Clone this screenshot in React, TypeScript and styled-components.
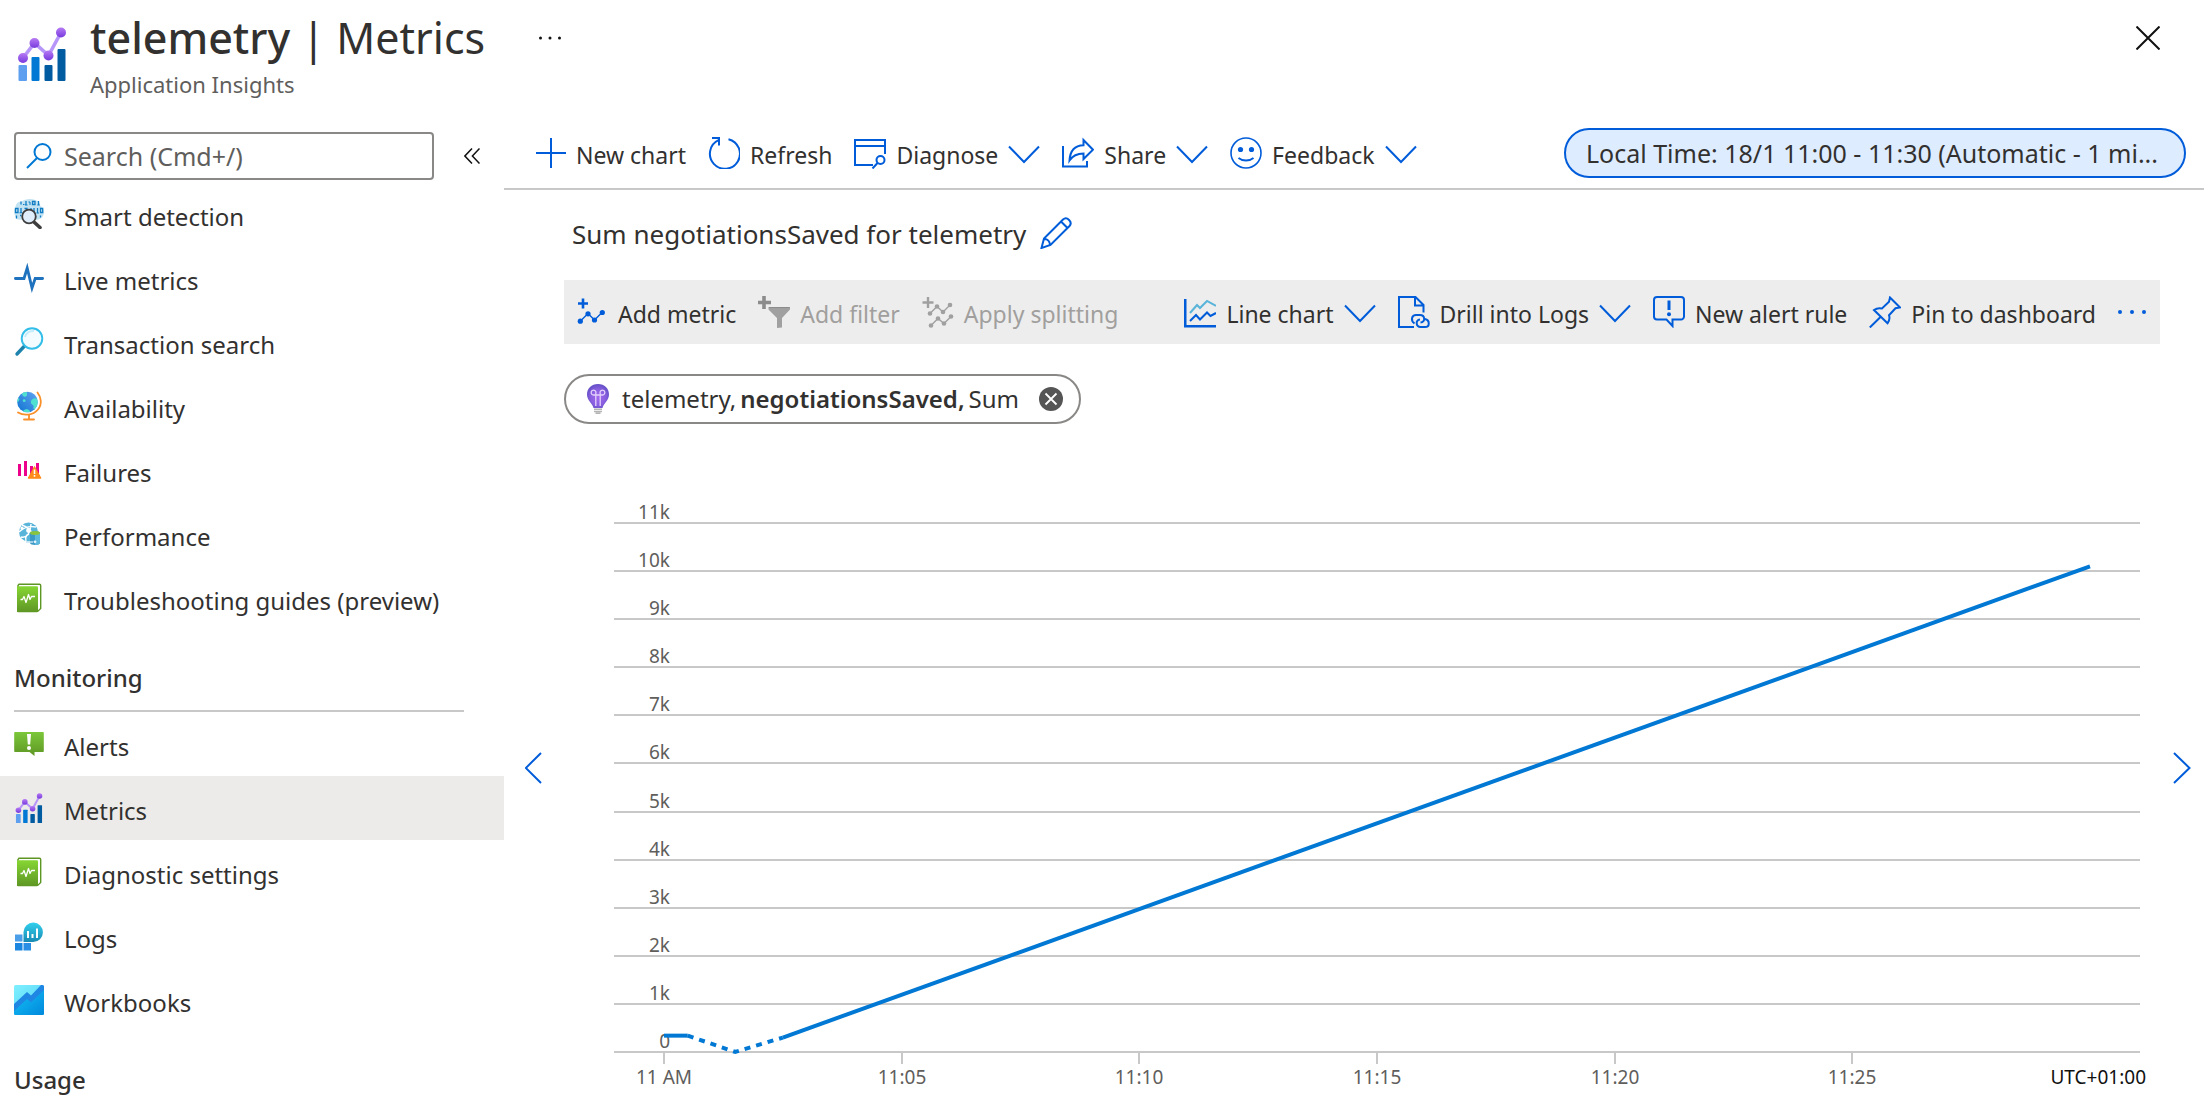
import React from "react";
import styled, { createGlobalStyle } from "styled-components";

const BLUE = "#015cda";
const TEXT = "#323130";

const GlobalStyle = createGlobalStyle`
  *, *::before, *::after { box-sizing: border-box; }
  body {
    margin: 0;
    background: #fff;
    color: ${TEXT};
    font-family: "Noto Sans", "Open Sans", sans-serif;
    font-size: 24px;
    line-height: 32px;
    overflow: hidden;
  }
  button, input { font: inherit; color: inherit; }
  svg { display: block; flex: none; }
`;

const Page = styled.div`
  display: flex;
  flex-direction: column;
  height: 100vh;
`;

const Header = styled.header`
  display: flex;
  align-items: flex-start;
  flex: none;
  height: 118px;
  padding: 8px 44px 0 18px;
`;

const HeaderIcon = styled.div`
  padding-top: 19px;
  margin-right: 24px;
`;

const Title = styled.h1`
  margin: 0;
  font-size: 43px;
  line-height: 60px;
  font-weight: 400;
  white-space: nowrap;
`;

const TitleName = styled.span`
  font-weight: 500;
`;

const Subtitle = styled.p`
  margin: 0;
  font-size: 22px;
  color: #605e5c;
`;

const IconButton = styled.button`
  display: flex;
  align-items: center;
  justify-content: center;
  padding: 0;
  border: 0;
  background: none;
  cursor: pointer;
`;

const MoreButton = styled(IconButton)`
  height: 60px;
  margin-left: 54px;
`;

const CloseButton = styled(IconButton)`
  height: 60px;
  margin-left: auto;
`;

const Body = styled.div`
  display: flex;
  flex: 1;
  min-height: 0;
`;

const Sidebar = styled.nav`
  flex: none;
  width: 504px;
  padding-top: 14px;
`;

const SearchRow = styled.div`
  display: flex;
  align-items: center;
  gap: 30px;
  height: 48px;
  margin: 0 0 2px 14px;
`;

const SearchBox = styled.label`
  display: flex;
  align-items: center;
  gap: 12px;
  width: 420px;
  height: 48px;
  padding: 0 10px;
  border: 2px solid #8a8886;
  border-radius: 4px;
`;

const SearchInput = styled.input`
  flex: 1;
  min-width: 0;
  padding: 0;
  border: 0;
  outline: 0;
  background: none;
  font-size: 25px;
  &::placeholder { color: #605e5c; opacity: 1; }
`;

const NavList = styled.ul`
  margin: 0;
  padding: 0;
  list-style: none;
`;

const NavLink = styled.a<{ $active?: boolean }>`
  display: flex;
  align-items: center;
  gap: 20px;
  height: 64px;
  padding-left: 14px;
  background: ${(p) => (p.$active ? "#edebe9" : "transparent")};
  color: inherit;
  text-decoration: none;
`;

const NavText = styled.span`
  padding-top: 6px;
`;

const NavHeading = styled.h2`
  margin: 0 40px 0 14px;
  padding: 32px 0 16px;
  border-bottom: 2px solid #c8c8c8;
  font-size: 24px;
  font-weight: 500;
`;

const Main = styled.main`
  display: flex;
  flex-direction: column;
  flex: 1;
  min-width: 0;
`;

const CommandBar = styled.div`
  display: flex;
  align-items: center;
  gap: 22px;
  flex: none;
  height: 72px;
  padding: 0 18px 0 30px;
  border-bottom: 2px solid #c8c8c8;
`;

const Command = styled.button`
  display: flex;
  align-items: center;
  gap: 10px;
  padding: 0;
  border: 0;
  background: none;
  font-size: 23px;
  white-space: nowrap;
  cursor: pointer;
  &:disabled { color: #a19f9d; cursor: default; }
`;

const CommandText = styled.span`
  padding-top: 4px;
`;

const TimeRange = styled.button`
  width: 622px;
  height: 50px;
  margin-left: auto;
  padding: 0 20px;
  border: 2px solid ${BLUE};
  border-radius: 25px;
  background: #deecff;
  font-size: 25px;
  text-align: left;
  white-space: nowrap;
  overflow: hidden;
  cursor: pointer;
`;

const ChartHeading = styled.div`
  display: flex;
  align-items: center;
  gap: 14px;
  flex: none;
  height: 90px;
  padding: 0 0 4px 68px;
`;

const ChartTitle = styled.h2`
  margin: 0;
  padding-top: 2px;
  font-size: 26px;
  font-weight: 400;
`;

const ChartBar = styled.div`
  display: flex;
  align-items: center;
  gap: 22px;
  flex: none;
  height: 64px;
  margin: 0 44px 0 60px;
  padding: 0 14px 0 12px;
  background: #ededed;
`;

const BarSpacer = styled.span`
  flex: 1;
`;

const MetricRow = styled.div`
  display: flex;
  flex: none;
  padding: 30px 44px 12px 60px;
`;

const MetricPill = styled.div`
  display: flex;
  align-items: center;
  height: 50px;
  padding: 0 16px 0 20px;
  border: 2px solid #8a8886;
  border-radius: 25px;
  white-space: nowrap;
`;

const MetricText = styled.span`
  display: flex;
  gap: 4px;
  margin: 0 20px 0 12px;
`;

const MetricName = styled.strong`
  font-weight: 600;
`;

const ChartArea = styled.div`
  display: flex;
  align-items: center;
  flex: 1;
  min-height: 0;
`;

const PagerButton = styled(IconButton)<{ $width: number }>`
  flex: none;
  width: ${(p) => p.$width}px;
  height: 64px;
`;

const ChartSvg = styled.svg`
  flex: 1;
  min-width: 0;
  overflow: visible;
`;

const AxisText = styled.text`
  font-size: 19px;
  fill: #605e5c;
`;

const ZoneText = styled(AxisText)`
  fill: #111;
`;

/* ---------- icons ---------- */

const MetricsIcon = ({ width, height, id }: { width: number; height: number; id: string }) => (
  <svg width={width} height={height} viewBox="0 0 48 54" aria-hidden="true">
    <defs>
      <linearGradient id={id} x1="0" y1="0" x2="0" y2="1">
        <stop offset="0" stopColor="#b77af4" />
        <stop offset="1" stopColor="#773adc" />
      </linearGradient>
    </defs>
    <rect x="0.5" y="38" width="8.5" height="16" rx="1" fill="#5ea0ef" />
    <rect x="13.5" y="30" width="8" height="24" rx="1" fill="#0078d4" />
    <rect x="26.5" y="38" width="8" height="16" rx="1" fill="#005ba1" />
    <rect x="39.5" y="22" width="8" height="32" rx="1" fill="#005ba1" />
    <path d="M5 31 16.500 16 30.500 28.500 43 5.500" fill="none" stroke="#b796f9" strokeWidth="3.600" />
    {[[5, 31], [16.5, 16], [30.5, 28.5], [43, 5.5]].map(([x, y]) => (
      <circle key={x} cx={x} cy={y} r="5" fill={`url(#${id})`} />
    ))}
  </svg>
);

const SearchIcon = () => (
  <svg width="26" height="26" viewBox="0 0 26 26" fill="none" stroke="#0078d4" strokeWidth="2" aria-hidden="true">
    <circle cx="16.500" cy="9" r="8" />
    <path d="M11 15 1 25" />
  </svg>
);

const CollapseIcon = () => (
  <svg width="16" height="16" viewBox="0 0 16 16" fill="none" stroke="#111" strokeWidth="1.500" aria-hidden="true">
    <path d="M8 .5.900 8 8 15.500M15.500.5 8.400 8l7.100 7.500" />
  </svg>
);

const CloseIcon = () => (
  <svg width="24" height="24" viewBox="0 0 24 24" stroke="#111" strokeWidth="2" aria-hidden="true">
    <path d="M.5.5l23 23M23.500.5l-23 23" />
  </svg>
);

const DotsIcon = ({ color, size, radius }: { color: string; size: number; radius: number }) => (
  <svg width={size} height="6" viewBox={`0 0 ${size} 6`} fill={color} aria-hidden="true">
    <circle cx={radius} cy="3" r={radius} />
    <circle cx={size / 2} cy="3" r={radius} />
    <circle cx={size - radius} cy="3" r={radius} />
  </svg>
);

const SmartDetectionIcon = () => (
  <svg width="30" height="30" viewBox="0 0 30 30" aria-hidden="true">
    <path d="M8 2.500C11-.5 19-.8 22 1.500c3 .2 4.500 3 4.200 5.500 4 1.500 5 8 2 11-2 2.500-4 3-7 2.500L8 20.500c-4 1-7-1-7-4-1.500-3-1-6.500.5-8C1.500 5 4 2 8 2.500z" fill="#c3e3f2" />
    <g fill="none" stroke="#0f7cc4" strokeWidth="1.300">
      <path d="M7 2.500v3M12 2v4M18.500 2.500h2.500v3h-2.500zM24.500 2v4M1.500 9.500h2.500v4h-2.500zM7 9v5M10.500 9.500h2.500v3M17 9v2M20 9v5M23.500 9v5M26.500 9.500h2.200v4h-2.200zM2.500 16.500v3M6 16.500h1.500M26.500 16.500v2" />
      <path d="M9 5.500h1.500M5.500 13.800h3M11 6h2.500M14.500 3h1.500v3M23.300 6h2.500M19 14h2.200M22.500 14h2.500" strokeWidth="1" />
    </g>
    <path d="M20.500 23.500 26 28.500" stroke="#3e3e3e" strokeWidth="3.600" strokeLinecap="round" />
    <circle cx="15" cy="17.500" r="6.800" fill="#dfeefa" stroke="#3e3e3e" strokeWidth="1.800" />
  </svg>
);

const PulseIcon = () => (
  <svg width="30" height="30" viewBox="0 0 30 30" fill="none" stroke="#1f72bd" strokeWidth="2.800" strokeLinejoin="miter" strokeLinecap="round" aria-hidden="true">
    <path d="M1.400 15.500H10L13.200 5l4.800 20 3.200-9.500h7.400" />
  </svg>
);

const TransactionIcon = () => (
  <svg width="30" height="30" viewBox="0 0 30 30" fill="none" aria-hidden="true">
    <path d="M11 18.500 3 27" stroke="#1d83ad" strokeWidth="3.400" strokeLinecap="round" />
    <circle cx="18" cy="11.500" r="10.300" fill="#f2fbff" stroke="#32bee8" strokeWidth="1.900" />
    <path d="M11 10a8 8 0 0 1 9-6" stroke="#c3ecfa" strokeWidth="2" />
  </svg>
);

const GlobeIcon = () => (
  <svg width="30" height="30" viewBox="0 0 30 30" aria-hidden="true">
    <defs>
      <linearGradient id="globe" x1="0" y1="1" x2="1" y2="0">
        <stop offset="0" stopColor="#0f74d1" />
        <stop offset="1" stopColor="#62a4f1" />
      </linearGradient>
      <clipPath id="globeClip"><circle cx="13.500" cy="11" r="10.300" /></clipPath>
    </defs>
    <circle cx="13.500" cy="11" r="10.300" fill="url(#globe)" />
    <g clipPath="url(#globeClip)" fill="#4fe0cf">
      <path d="M8 1l5-1c-.5 3 1 4-1 5.500-2 1-4.500-1-4-4.500zM3 8l2.200-1c.5 2-.5 3.500-2.200 4.500z" />
      <circle cx="10.200" cy="9.700" r="1.400" />
      <path d="M17 10c1.500-3 4-3.500 7-2l1 6-5 4.500c-1.500-1.500.5-3-1-4.500-1.500-.5-2.500-2-2-4zM9 20c2-2.500 5-2 6.500-.5l1 2.500h-8z" />
    </g>
    <path d="M23.500 1.500C27 6 28.500 13 24 18.500 19 24.500 10 25 4 21.500" fill="none" stroke="#f98f28" strokeWidth="1.800" strokeLinecap="round" />
    <path d="M15 24v4M10 28.500h10" stroke="#f98f28" strokeWidth="1.800" strokeLinecap="round" />
  </svg>
);

const FailuresIcon = () => (
  <svg width="30" height="30" viewBox="0 0 30 30" aria-hidden="true">
    <path d="M4 9h3v12H4zM10 6h3v15h-3zM16 11h3v10h-3zM22 8h3v12h-3z" fill="#ec008c" />
    <path d="M20.500 11.500 27 23.200H14.200z" fill="#ff8c1a" stroke="#ff8c1a" strokeLinejoin="round" />
    <path d="M20.500 14.500v4.500M20.500 20v1.800" stroke="#fff" strokeWidth="1.600" />
  </svg>
);

const PerformanceIcon = () => (
  <svg width="30" height="30" viewBox="0 0 30 30" aria-hidden="true">
    <circle cx="14.500" cy="13" r="9.500" fill="#59b4d9" />
    <path d="M5 13c5-5 11-6 17-5M8 6c6 2 10 6 12 12M7 18c5 1 9-2 10-13M12 22c-1-4 0-6 3-7" fill="none" stroke="#fff" strokeWidth="1.400" />
    <circle cx="14.500" cy="11.500" r="2.400" fill="#fff" />
    <circle cx="8" cy="9" r="1.600" fill="#fff" />
    <path d="M16 14c0-2.500 10-2.500 10 0v10c0 2.500-10 2.500-10 0z" fill="#3c99c5" />
    <path d="M21 12.200c3 0 5 .8 5 1.800v10c0 1.200-2 1.900-5 1.900z" fill="#5db8dd" />
    <ellipse cx="21" cy="14" rx="5" ry="1.900" fill="#8ac43f" />
    <path d="M12 23h7" stroke="#c5e4f2" strokeWidth="1.500" />
    <circle cx="21" cy="22.800" r="1.400" fill="#e8f5fb" />
  </svg>
);

const GuideIcon = ({ id }: { id: string }) => (
  <svg width="30" height="30" viewBox="0 0 30 30" aria-hidden="true">
    <defs>
      <linearGradient id={id} x1="0" y1="0" x2="0" y2="1">
        <stop offset="0" stopColor="#86d633" />
        <stop offset="1" stopColor="#5e9624" />
      </linearGradient>
    </defs>
    <path d="M5 1.200h20.500a1.200 1.200 0 0 1 1.200 1.200v23l-3 3H4V2.500z" fill="#fff" stroke="#5e9624" strokeWidth="1.400" />
    <rect x="3" y="3.200" width="21" height="26" rx="1.200" fill={`url(#${id})`} />
    <path d="M6.500 16.500h2l1.500-3 2 6 2.500-8 1.500 5 1.500-3h3.500" fill="none" stroke="#fff" strokeWidth="1.300" strokeLinejoin="round" />
  </svg>
);

const AlertsIcon = () => (
  <svg width="30" height="30" viewBox="0 0 30 30" aria-hidden="true">
    <defs>
      <linearGradient id="alerts" x1="0" y1="0" x2="0" y2="1">
        <stop offset="0" stopColor="#7cc73a" />
        <stop offset="1" stopColor="#5e9624" />
      </linearGradient>
    </defs>
    <path d="M1 3h28a.8.8 0 0 1 .8.8v18.500a.8.8 0 0 1-.8.800h-8.500v4l-5-4H1a.8.8 0 0 1-.8-.8V3.800A.8.8 0 0 1 1 3z" fill="url(#alerts)" />
    <path d="M13 5h4l-.8 10.500h-2.400z" fill="#fff" />
    <circle cx="15" cy="19" r="2" fill="#fff" />
  </svg>
);

const LogsIcon = () => (
  <svg width="30" height="30" viewBox="0 0 30 30" aria-hidden="true">
    <defs>
      <linearGradient id="logs" x1="0" y1="0" x2="0" y2="1">
        <stop offset="0" stopColor="#32d0ee" />
        <stop offset="1" stopColor="#198ab3" />
      </linearGradient>
    </defs>
    <rect x="1" y="13.500" width="7.500" height="7" fill="#4a9fe8" />
    <rect x="1" y="22" width="7.500" height="7.500" fill="#1b86df" />
    <rect x="9.500" y="22" width="7.500" height="7.500" fill="#2a8fe4" />
    <path d="M9.500 21V11a9.700 9.700 0 1 1 9.700 10z" fill="url(#logs)" />
    <path d="M14 10v7M18.500 13v4M23 7.500v9.500" stroke="#fff" strokeWidth="2" />
  </svg>
);

const WorkbooksIcon = () => (
  <svg width="30" height="30" viewBox="0 0 30 30" aria-hidden="true">
    <defs>
      <linearGradient id="workTop" x1="0" y1="0" x2="1" y2="1">
        <stop offset="0" stopColor="#7ff0ff" />
        <stop offset="1" stopColor="#50d0f5" />
      </linearGradient>
      <linearGradient id="workBottom" x1="0" y1="0" x2="1" y2="1">
        <stop offset="0" stopColor="#16c3f5" />
        <stop offset="1" stopColor="#0088dd" />
      </linearGradient>
    </defs>
    <rect width="30" height="30" rx="1.500" fill="url(#workTop)" />
    <path d="M0 25 13 13l4 4L30 4v24.500a1.500 1.500 0 0 1-1.500 1.500h-27A1.500 1.500 0 0 1 0 28.500z" fill="url(#workBottom)" />
    <path d="M0 19 13 7l4 3.500L27 0h1.500A1.500 1.500 0 0 1 30 1.500V5L17 17.500l-4-3.500L0 26z" fill="#1f86e3" />
  </svg>
);

const Line = ({ children, width = 2 }: { children: React.ReactNode; width?: number }) => (
  <svg width="32" height="32" viewBox="0 0 32 32" fill="none" stroke={BLUE} strokeWidth={width} aria-hidden="true">
    {children}
  </svg>
);

const PlusIcon = () => <Line><path d="M17 1v30M2 16h30" /></Line>;
const RefreshIcon = () => (
  <Line><path d="M10.500 3.200A15 15 0 1 0 20.500 2.200M4 1h7v7.500" /></Line>
);
const DiagnoseIcon = () => (
  <Line>
    <path d="M19 28H1V3h30v14M1 9h30" />
    <circle cx="26.500" cy="23" r="4" />
    <path d="M23.500 26 18.500 31.500" />
  </Line>
);
const ChevronIcon = () => <Line><path d="M1 9.500 16 25 31 9.500" /></Line>;
const ShareIcon = () => (
  <Line>
    <path d="M1 9v20.500h24V24" />
    <path d="M7.500 23.500C8 14 13 8.500 21.500 8.200V3L31 12.700 21.500 22v-5.500C15 16.500 10.500 19 7.500 23.500z" />
  </Line>
);
const SmileIcon = () => (
  <Line>
    <circle cx="16" cy="16" r="15" strokeWidth="1.600" />
    <circle cx="10.500" cy="12.500" r="2.600" fill={BLUE} stroke="none" />
    <circle cx="21.500" cy="12.500" r="2.600" fill={BLUE} stroke="none" />
    <path d="M8.500 21c4 3.300 11 3.300 15 0" />
  </Line>
);
const PencilIcon = () => (
  <Line>
    <path d="M1.500 31 4 21.500 23 2.500c4-3.500 10 2.500 6.500 6.500L10.500 28zM21 4.500l7 7M4.500 22c3 0 5.500 2.500 5.500 6" />
  </Line>
);
const AddMetricIcon = () => (
  <Line width={1.4}>
    <path d="M7 2.500v10M2 7.500h10" strokeWidth="2.600" />
    <path d="M4 25.500 12 17.500 18.500 24 26.500 16" />
    <g fill={BLUE} stroke="none">
      <circle cx="4.300" cy="25.200" r="2.600" /><circle cx="12" cy="17.800" r="2.600" />
      <circle cx="18.500" cy="24" r="2.600" /><circle cx="26.300" cy="16.500" r="2.600" />
    </g>
  </Line>
);
const FilterIcon = () => (
  <svg width="32" height="32" viewBox="0 0 32 32" aria-hidden="true">
    <path d="M6 0v13M0 6.500h13" stroke="#8c8c8c" strokeWidth="3.600" />
    <path d="M10.500 11H32v2.500l-8 8.500v9.500l-5 .5V22l-8.500-8.500z" fill="#a0a0a0" />
    <path d="M11 11.500h20.500" stroke="#8c8c8c" />
  </svg>
);
const SplitIcon = () => (
  <svg width="32" height="32" viewBox="0 0 32 32" fill="none" stroke="#a0a0a0" strokeWidth="1.400" aria-hidden="true">
    <path d="M6 1v11M.5 6.500h11" strokeWidth="2.400" />
    <path d="M8 17.500 15 10.500 21 16 28 9M9 29.500 16 22.500 22 27.500 29 20.500" />
    <g fill="#a0a0a0" stroke="none">
      {[[8, 17.5], [15, 10.5], [21, 16], [28, 9], [9, 29.500], [16, 22.5], [22, 27.5], [29, 20.5]].map(([x, y]) => (
        <circle key={`${x}-${y}`} cx={x} cy={y} r="2.300" />
      ))}
    </g>
  </svg>
);
const LineChartIcon = () => (
  <Line>
    <path d="M1.200 3v27.300H32" strokeWidth="2.600" />
    <path d="M6 17l7-8 3 3 7-7 9 5" stroke="#59b4d9" />
    <path d="M6 25l6-6 4 4.500 7-7 3.500 3.500 5.500-3" />
  </Line>
);
const DrillIcon = () => (
  <Line>
    <path d="M16 31H1V1h16.500l8 8v7.500M17 1.500V9.500h8" />
    <path d="M16.500 27.500c-4.500-3.500-2.500-8.500 1.500-8.500h4c5 0 6 7 .5 7.500M27 23c5 1 5 8 0 8h-4.500c-4.500 0-5.500-7-.5-7.500" />
  </Line>
);
const AlertRuleIcon = () => (
  <Line>
    <path d="M4 1h24a3 3 0 0 1 3 3v16.500a3 3 0 0 1-3 3h-8.500v6.500l-6-6.500H4a3 3 0 0 1-3-3V4a3 3 0 0 1 3-3z" />
    <path d="M16 4.500v9.500" strokeWidth="3" />
    <circle cx="16" cy="18.300" r="2" fill={BLUE} stroke="none" />
  </Line>
);
const PinIcon = () => (
  <Line>
    <path d="M21 1.500 31 11.500l-4.500.8-6.500 7c1 3 .5 5.500-1.500 8L5 14c2.500-1.800 5-2.300 8-1.500l7-6.800zM12 20.500.8 31.500" />
  </Line>
);

const BulbIcon = () => (
  <svg width="24" height="30" viewBox="0 0 24 30" aria-hidden="true">
    <defs>
      <radialGradient id="bulb" cx="0.500" cy="0.550" r="0.600">
        <stop offset="0" stopColor="#a268ee" />
        <stop offset="0.550" stopColor="#8a5fe0" />
        <stop offset="1" stopColor="#5a4cc0" />
      </radialGradient>
    </defs>
    <path d="M12 0c6.500 0 11 4.500 11 10.500 0 6-5 8-6.500 13.500h-9C6 18.500 1 16.500 1 10.500 1 4.500 5.500 0 12 0z" fill="url(#bulb)" />
    <path d="M9.800 22V9.500a2.400 2.400 0 1 0-2.400 1.500h9.200a2.400 2.400 0 1 0-2.400-1.500V22" fill="none" stroke="#e3d2fb" strokeWidth="1.300" />
    <path d="M8 25.200h8M8 27.400h8M9.500 29.300h5" stroke="#b3b3b3" strokeWidth="1.500" />
  </svg>
);

const RemoveIcon = () => (
  <svg width="24" height="24" viewBox="0 0 24 24" aria-hidden="true">
    <circle cx="12" cy="12" r="12" fill="#555" />
    <path d="M6.500 6.500l11 11M17.500 6.500l-11 11" stroke="#fff" strokeWidth="1.800" />
  </svg>
);

const PagerIcon = ({ right }: { right?: boolean }) => (
  <svg width="18" height="32" viewBox="0 0 18 32" fill="none" stroke={BLUE} strokeWidth="2" aria-hidden="true">
    <path d={right ? "M1 1l15.500 15L1 31" : "M16 1 .8 16 16 31"} />
  </svg>
);

/* ---------- data ---------- */

const investigate = [
  { label: "Smart detection", icon: <SmartDetectionIcon /> },
  { label: "Live metrics", icon: <PulseIcon /> },
  { label: "Transaction search", icon: <TransactionIcon /> },
  { label: "Availability", icon: <GlobeIcon /> },
  { label: "Failures", icon: <FailuresIcon /> },
  { label: "Performance", icon: <PerformanceIcon /> },
  { label: "Troubleshooting guides (preview)", icon: <GuideIcon id="guideA" /> },
];

const monitoring = [
  { label: "Alerts", icon: <AlertsIcon /> },
  { label: "Metrics", icon: <MetricsIcon width={30} height={30} id="metricsSmall" />, active: true },
  { label: "Diagnostic settings", icon: <GuideIcon id="guideB" /> },
  { label: "Logs", icon: <LogsIcon /> },
  { label: "Workbooks", icon: <WorkbooksIcon /> },
];

type NavItem = { label: string; icon: React.ReactNode; active?: boolean };

const NavSection = ({ items }: { items: NavItem[] }) => (
  <NavList>
    {items.map((item) => (
      <li key={item.label}>
        <NavLink href="#" $active={item.active} aria-current={item.active ? "page" : undefined}>
          {item.icon}
          <NavText>{item.label}</NavText>
        </NavLink>
      </li>
    ))}
  </NavList>
);

type CommandProps = { icon: React.ReactNode; label: string; menu?: boolean; disabled?: boolean };

const CommandButton = ({ icon, label, menu, disabled }: CommandProps) => (
  <Command type="button" disabled={disabled}>
    {icon}
    <CommandText>{label}</CommandText>
    {menu && <ChevronIcon />}
  </Command>
);

/* ---------- chart ---------- */

const PLOT = { left: 50, right: 1576, top: 87, bottom: 616, origin: 100, end: 1526 };
const xAt = (minute: number) => PLOT.origin + (minute * (PLOT.end - PLOT.origin)) / 30;
const yAt = (value: number) => PLOT.bottom - (value * (PLOT.bottom - PLOT.top)) / 11;
const toPoints = (pairs: number[][]) => pairs.map(([m, v]) => `${xAt(m)},${yAt(v)}`).join(" ");

const yTicks = Array.from({ length: 12 }, (_, i) => i);
const xTicks = ["11 AM", "11:05", "11:10", "11:15", "11:20", "11:25"];

const MetricChart = () => (
  <ChartSvg viewBox="0 0 1596 664" role="img" aria-label="Sum negotiationsSaved for telemetry">
    {yTicks.map((v) => (
      <g key={v}>
        <line x1={PLOT.left} x2={PLOT.right} y1={Math.round(yAt(v))} y2={Math.round(yAt(v))} stroke="#c8c8c8" strokeWidth="2" />
        <AxisText x="106" y={Math.round(yAt(v)) - 4} textAnchor="end">{v === 0 ? "0" : `${v}k`}</AxisText>
      </g>
    ))}
    {xTicks.map((label, i) => (
      <g key={label}>
        <line x1={Math.round(xAt(i * 5))} x2={Math.round(xAt(i * 5))} y1={PLOT.bottom} y2={PLOT.bottom + 12} stroke="#c8c8c8" strokeWidth="2" />
        <AxisText x={Math.round(xAt(i * 5))} y="648" textAnchor="middle">{label}</AxisText>
      </g>
    ))}
    <ZoneText x="1582" y="648" textAnchor="end">UTC+01:00</ZoneText>
    <g fill="none" stroke="#0078d4" strokeWidth="4">
      <polyline points={toPoints([[0, 0.34], [0.5, 0.34]])} />
      <polyline points={toPoints([[0.5, 0.34], [1.5, 0], [2.5, 0.3]])} strokeDasharray="6 6" />
      <polyline points={toPoints([[2.5, 0.3], [30, 10.1]])} />
    </g>
  </ChartSvg>
);

export default function App() {
  return (
    <>
      <GlobalStyle />
      <Page>
        <Header>
          <HeaderIcon><MetricsIcon width={48} height={54} id="metricsLarge" /></HeaderIcon>
          <div>
            <Title><TitleName>telemetry</TitleName> | Metrics</Title>
            <Subtitle>Application Insights</Subtitle>
          </div>
          <MoreButton type="button" aria-label="More"><DotsIcon color="#111" size={22} radius={1.5} /></MoreButton>
          <CloseButton type="button" aria-label="Close"><CloseIcon /></CloseButton>
        </Header>

        <Body>
          <Sidebar>
            <SearchRow>
              <SearchBox>
                <SearchIcon />
                <SearchInput type="text" placeholder="Search (Cmd+/)" aria-label="Search" />
              </SearchBox>
              <IconButton type="button" aria-label="Collapse menu"><CollapseIcon /></IconButton>
            </SearchRow>
            <NavSection items={investigate} />
            <NavHeading>Monitoring</NavHeading>
            <NavSection items={monitoring} />
            <NavHeading>Usage</NavHeading>
          </Sidebar>

          <Main>
            <CommandBar>
              <CommandButton icon={<PlusIcon />} label="New chart" />
              <CommandButton icon={<RefreshIcon />} label="Refresh" />
              <CommandButton icon={<DiagnoseIcon />} label="Diagnose" menu />
              <CommandButton icon={<ShareIcon />} label="Share" menu />
              <CommandButton icon={<SmileIcon />} label="Feedback" menu />
              <TimeRange type="button">Local Time: 18/1 11:00 - 11:30 (Automatic - 1 mi...</TimeRange>
            </CommandBar>

            <ChartHeading>
              <ChartTitle>Sum negotiationsSaved for telemetry</ChartTitle>
              <IconButton type="button" aria-label="Edit title"><PencilIcon /></IconButton>
            </ChartHeading>

            <ChartBar>
              <CommandButton icon={<AddMetricIcon />} label="Add metric" />
              <CommandButton icon={<FilterIcon />} label="Add filter" disabled />
              <CommandButton icon={<SplitIcon />} label="Apply splitting" disabled />
              <BarSpacer />
              <CommandButton icon={<LineChartIcon />} label="Line chart" menu />
              <CommandButton icon={<DrillIcon />} label="Drill into Logs" menu />
              <CommandButton icon={<AlertRuleIcon />} label="New alert rule" />
              <CommandButton icon={<PinIcon />} label="Pin to dashboard" />
              <IconButton type="button" aria-label="More chart actions"><DotsIcon color={BLUE} size={28} radius={2} /></IconButton>
            </ChartBar>

            <MetricRow>
              <MetricPill>
                <BulbIcon />
                <MetricText>
                  <span>telemetry,</span>
                  <MetricName>negotiationsSaved,</MetricName>
                  <span>Sum</span>
                </MetricText>
                <IconButton type="button" aria-label="Remove metric"><RemoveIcon /></IconButton>
              </MetricPill>
            </MetricRow>

            <ChartArea>
              <PagerButton type="button" $width={60} aria-label="Earlier"><PagerIcon /></PagerButton>
              <MetricChart />
              <PagerButton type="button" $width={44} aria-label="Later"><PagerIcon right /></PagerButton>
            </ChartArea>
          </Main>
        </Body>
      </Page>
    </>
  );
}
